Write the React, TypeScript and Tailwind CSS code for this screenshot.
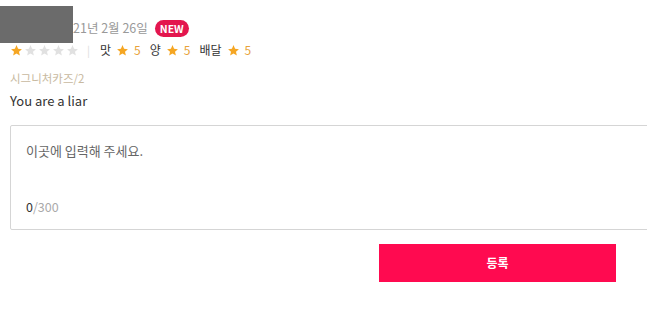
function Star({ on }: { on: boolean }) {
  return (
    <svg viewBox="0 0 24 24" className="w-[13px] h-[13px]" fill={on ? '#f5a623' : '#e1e1e1'}>
      <path d="M12 2l2.9 6.9 7.1.6-5.4 4.7 1.6 7.2L12 17.6 5.8 21.4l1.6-7.2L2 9.5l7.1-.6z" />
    </svg>
  );
}

function Score({ label }: { label: string }) {
  return (
    <span className="flex items-center gap-[5px]">
      <span className="text-[#333]">{label}</span>
      <Star on />
      <span className="text-[#e8a33a]">5</span>
    </span>
  );
}

export default function App() {
  return (
    <div
      className="w-[647px] h-[329px] bg-white overflow-hidden relative"
      style={{ fontFamily: '"Noto Sans CJK KR", "Noto Sans", sans-serif' }}
    >
      <div className="absolute left-0 top-[6px] w-[73px] h-[37px] bg-[#6b6b6b]" />
      <div className="pt-[19px] pl-[73px] flex items-center gap-[7px] h-[38px]">
        <span className="text-[12.5px] text-[#999]">21년 2월 26일</span>
        <span className="bg-[#e3164e] text-white text-[10.5px] font-bold rounded-full px-[5px] h-[17px] leading-[17px]">
          NEW
        </span>
      </div>
      <div className="pl-[10px] flex items-center h-[14px] mt-[5px] text-[12px]">
        <span className="flex gap-[1px]">
          <Star on />
          <Star on={false} />
          <Star on={false} />
          <Star on={false} />
          <Star on={false} />
        </span>
        <span className="text-[#ddd] ml-[8px] mr-[10px] text-[11px]">|</span>
        <span className="flex items-center gap-[9px]">
          <Score label="맛" />
          <Score label="양" />
          <Score label="배달" />
        </span>
      </div>
      <div className="pl-[10px] mt-[13px] text-[11.5px] text-[#c8b9a0] leading-[16px]">시그니처카즈/2</div>
      <div className="pl-[10px] mt-[6px] text-[13px] text-[#333] leading-[18px]">You are a liar</div>
      <div className="ml-[10px] mt-[15px] w-[660px] h-[105px] border border-[#d5d5d5] rounded-[2px] px-[15px] pt-[16px] flex flex-col justify-between pb-[13px]">
        <span className="text-[13px] text-[#666] leading-[18px]">이곳에 입력해 주세요.</span>
        <span className="text-[12.5px] leading-[18px]">
          <span className="text-[#333]">0</span>
          <span className="text-[#aaa]">/300</span>
        </span>
      </div>
      <div className="flex justify-end pr-[31px] mt-[14px]">
        <button className="w-[237px] h-[38px] bg-[#ff0a50] text-white text-[12px] font-bold">등록</button>
      </div>
    </div>
  );
}
